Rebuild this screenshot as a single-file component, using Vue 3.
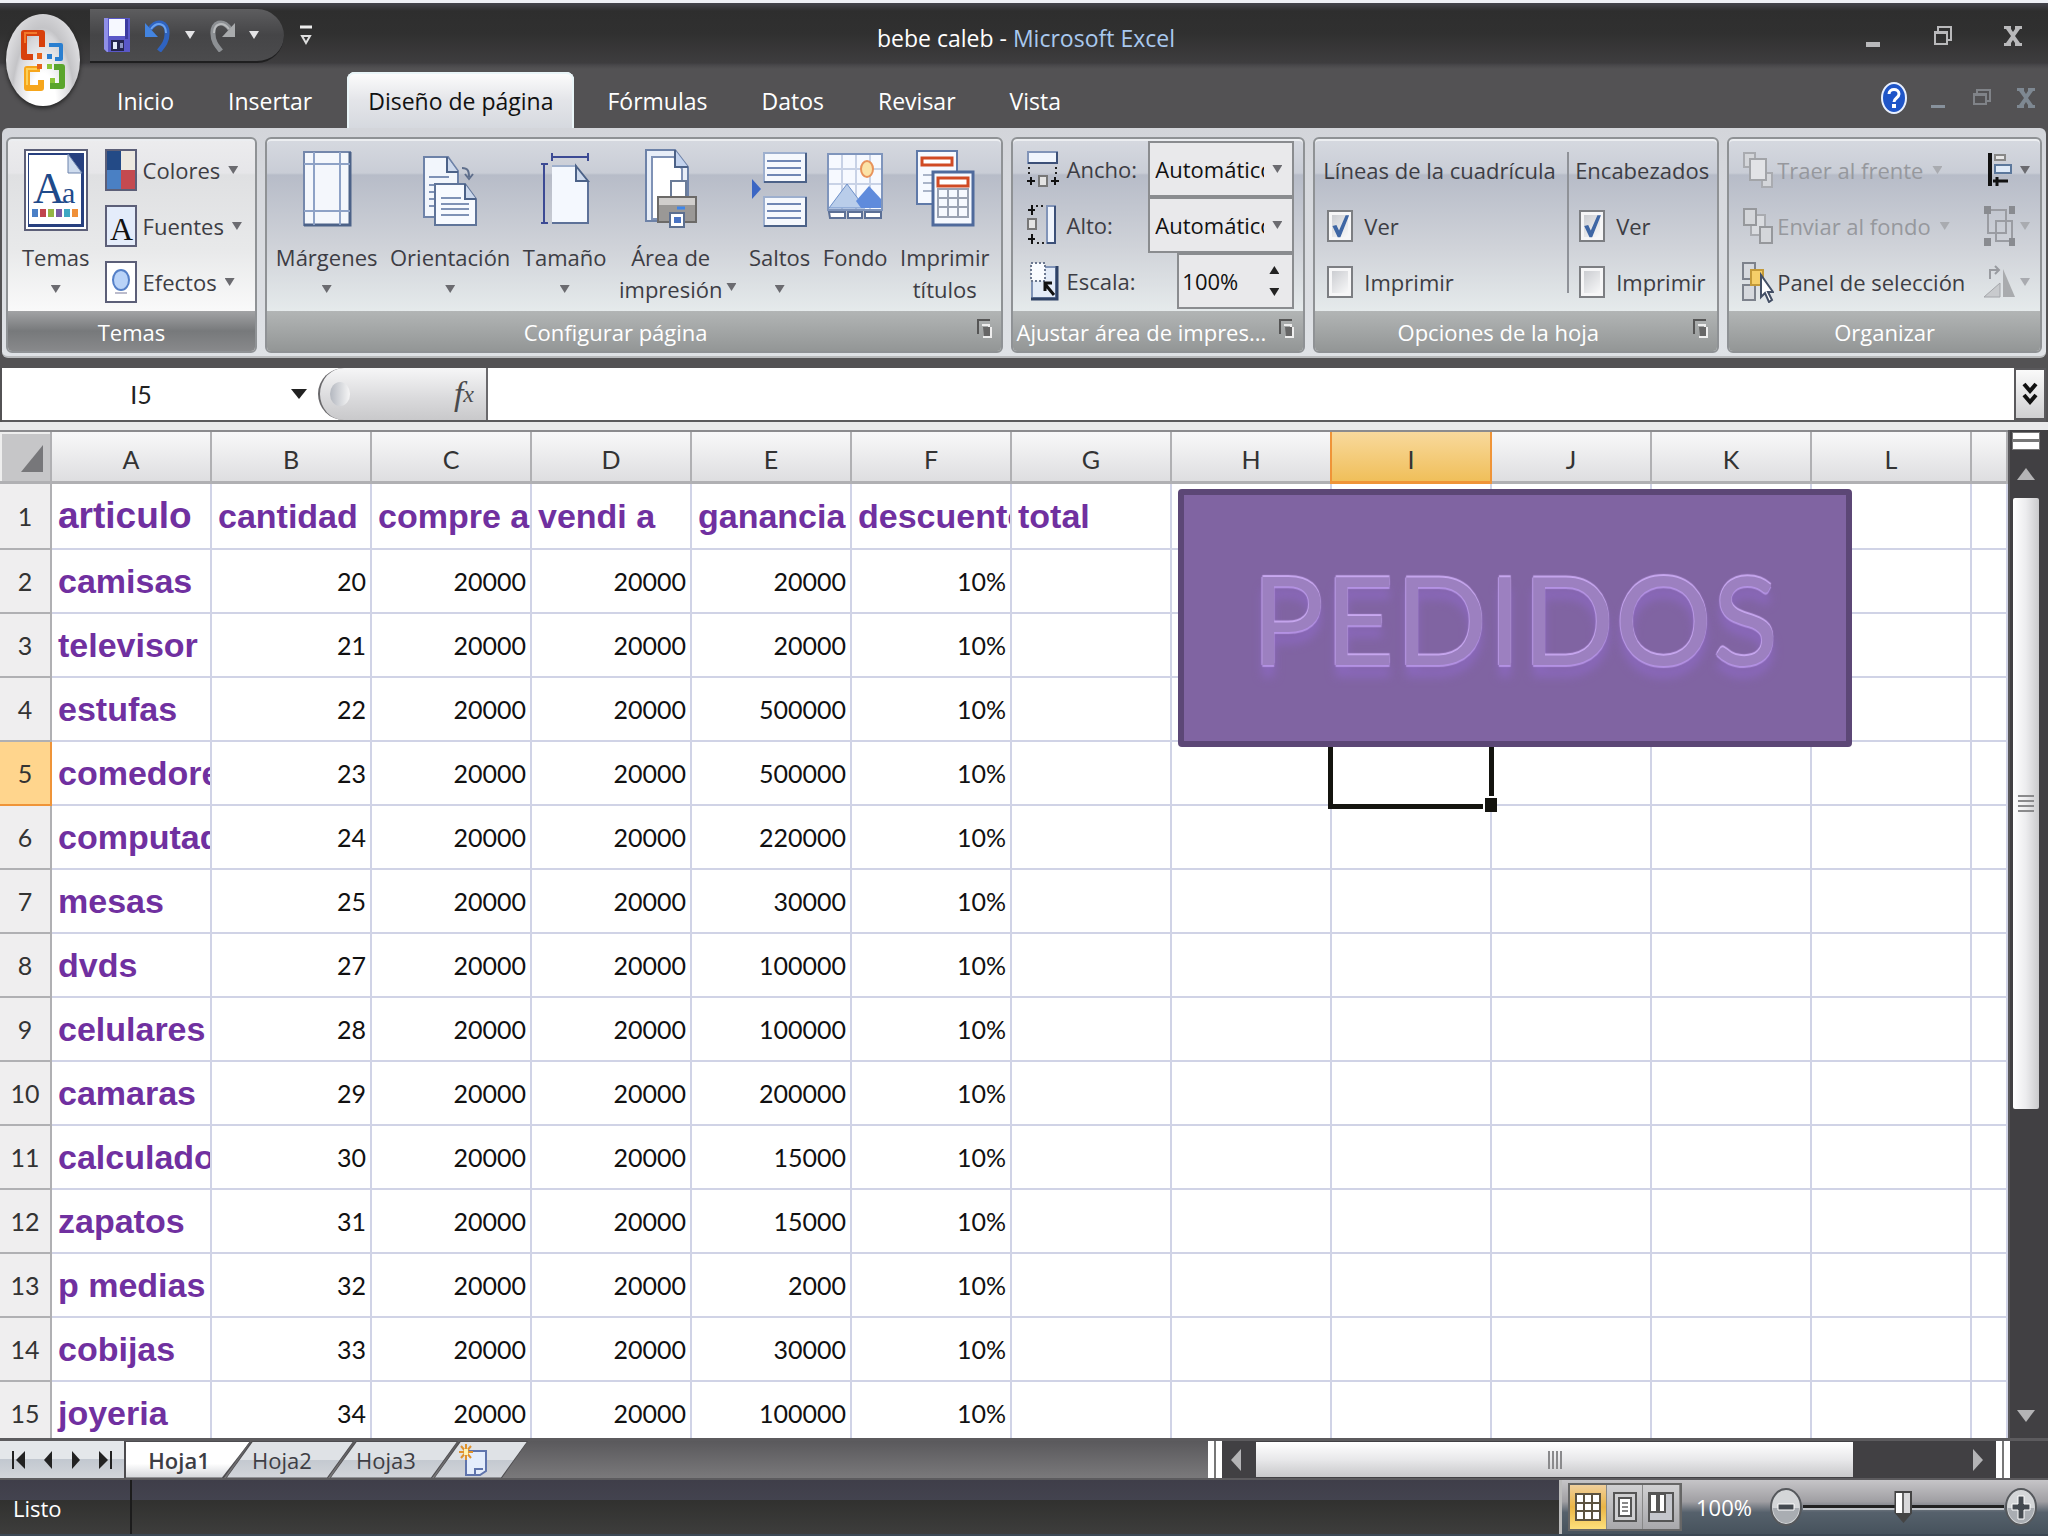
<script setup>
import { ref } from 'vue'

const columns = ['A', 'B', 'C', 'D', 'E', 'F', 'G', 'H', 'I', 'J', 'K', 'L', '']
const titles = ['articulo', 'cantidad', 'compre a', 'vendi a', 'ganancia', 'descuento', 'total']
const items = [
  ['camisas', 20, 20000],
  ['televisor', 21, 20000],
  ['estufas', 22, 500000],
  ['comedores', 23, 500000],
  ['computador', 24, 220000],
  ['mesas', 25, 30000],
  ['dvds', 27, 100000],
  ['celulares', 28, 100000],
  ['camaras', 29, 200000],
  ['calculadora', 30, 15000],
  ['zapatos', 31, 15000],
  ['p medias', 32, 2000],
  ['cobijas', 33, 30000],
  ['joyeria', 34, 100000],
]
const rows = [titles, ...items.map(([name, qty, gain]) => [name, qty, 20000, 20000, gain, '10%'])]
const selected = { row: 5, col: 8 }

const tabs = ['Inicio', 'Insertar', 'Diseño de página', 'Fórmulas', 'Datos', 'Revisar', 'Vista']
const activeTab = ref('Diseño de página')
const sheets = ['Hoja1', 'Hoja2', 'Hoja3']
const activeSheet = ref('Hoja1')

const optionSets = [
  { title: 'Líneas de la cuadrícula', id: 'grid' },
  { title: 'Encabezados', id: 'head' },
]
</script>

<template>
  <div class="app">
    <header class="titlebar">
      <div class="quick">
        <button aria-label="Guardar">
          <svg width="28" height="36" viewBox="0 0 28 36"><path d="M1 1h26v34H4l-3-3z" fill="#5a58c8" /><path d="M1 1h4v34H4l-3-3z" fill="#8f8fe8" /><path d="M6 2h16v17H6z" fill="#f6f8ff" /><path d="M22 2h3v20h-3z" fill="#3b3aa0" /><path d="M8 23h13v11H8z" fill="#26264e" /><path d="M10 25h4v7h-4z" fill="#e6ecf8" /><path d="M17 26h3v5h-3z" fill="#8b93c0" /></svg>
        </button>
        <button aria-label="Deshacer">
          <svg width="28" height="34" viewBox="0 0 28 34"><path d="M6 11C13 1 24 4 23 16c0 7-3 11-8 17" fill="none" stroke="#2f63c0" stroke-width="5" /><path d="M7 11C13 3 22 5 22 15" fill="none" stroke="#6ba2ee" stroke-width="2" /><path d="M1 5v14h13z" fill="#4384e0" /></svg>
        </button>
        <i class="arrow light"></i>
        <button aria-label="Rehacer">
          <svg width="28" height="34" viewBox="0 0 28 34"><path d="M22 11C15 1 4 4 5 16c0 7 3 11 8 17" fill="none" stroke="#8d9094" stroke-width="5" /><path d="M21 11C15 3 6 5 6 15" fill="none" stroke="#b9bbbd" stroke-width="2" /><path d="M27 5v14H14z" fill="#a9abad" /></svg>
        </button>
        <i class="arrow light"></i>
      </div>
      <button class="customize" aria-label="Personalizar"><svg width="14" height="22" viewBox="0 0 14 22"><path d="M1 2h12" stroke="#eee" stroke-width="3" /><path d="M3 11h8l-4 7z" fill="none" stroke="#ddd" stroke-width="2" /></svg></button>
      <h1>bebe caleb - <span>Microsoft Excel</span></h1>
      <div class="winctl">
        <button aria-label="Minimizar"><svg width="20" height="24" viewBox="0 0 20 24"><path d="M3 18h14v5H3z" fill="#b9b9bb" /></svg></button>
        <button aria-label="Restaurar"><svg width="20" height="22" viewBox="0 0 20 22"><path d="M5 6V2h13v13h-4M2 7h12v12H2zM2 8h12" fill="none" stroke="#b9b9bb" stroke-width="2" /></svg></button>
        <button aria-label="Cerrar"><svg width="20" height="22" viewBox="0 0 20 22"><path d="M1 1h7v3l2 3 2-3V1h7v3h-2l-5 7 5 7h2v3h-7v-3l-2-3-2 3v3H1v-3h2l5-7-5-7H1z" fill="#b9b9bb" /></svg></button>
      </div>
    </header>

    <nav class="tabs">
      <button v-for="t in tabs" :key="t" :class="{ active: t === activeTab }" @click="activeTab = t">{{ t }}</button>
      <div class="mdi">
        <button aria-label="Ayuda"><svg width="28" height="36" viewBox="0 0 28 36"><ellipse cx="14" cy="18" rx="12" ry="15" fill="#1f55c8" stroke="#e8f0ff" stroke-width="2" /><path d="M9 14c0-6 10-6 10 0 0 4-5 4-5 8" fill="none" stroke="#fff" stroke-width="3" /><path d="M12 24h4v4h-4z" fill="#fff" /></svg></button>
        <button aria-label="Minimizar libro"><svg width="18" height="24" viewBox="0 0 18 24"><path d="M2 19h14v3H2z" fill="#87919c" /></svg></button>
        <button aria-label="Restaurar libro"><svg width="20" height="20" viewBox="0 0 20 20"><path d="M5 5V2h13v11h-4M2 6h12v10H2zM2 7h12" fill="none" stroke="#808388" stroke-width="2" /></svg></button>
        <button aria-label="Cerrar libro"><svg width="20" height="22" viewBox="0 0 20 22"><path d="M1 1h7v3l2 3 2-3V1h7v3h-2l-5 7 5 7h2v3h-7v-3l-2-3-2 3v3H1v-3h2l5-7-5-7H1z" fill="#7e8892" /></svg></button>
      </div>
    </nav>

    <button class="orb" aria-label="Botón de Office">
      <svg width="48" height="64" viewBox="0 0 48 64">
        <path d="M14 29H5V5h18v14" fill="none" stroke="#d8400c" stroke-width="6" stroke-linejoin="round" />
        <path d="M6 15V5h12" fill="none" stroke="#f27a2c" stroke-width="2" />
        <path d="M30 17h12v14h-6" fill="none" stroke="#2a7fd0" stroke-width="4" stroke-linejoin="round" />
        <path d="M21 41H8v19h14v-8" fill="none" stroke="#f6a61c" stroke-width="6" stroke-linejoin="round" />
        <path d="M8 57V41h10" fill="none" stroke="#fcd058" stroke-width="2" />
        <path d="M31 58h12V39h-8" fill="none" stroke="#5aa52c" stroke-width="6" stroke-linejoin="round" />
        <path d="M18 25h5v6h-5zM18 36h5v5h-5z" fill="#e8641c" /><path d="M28 26h5v5h-5z" fill="#2a7fd0" /><path d="M28 36h5v5h-5zM31 50h5v5h-5z" fill="#8cc63a" />
      </svg>
    </button>

    <section class="ribbon">
      <div class="group bright">
        <div class="body themes">
          <button class="big">
            <svg width="64" height="82" viewBox="0 0 64 82"><path d="M1 1h62v80H1z" fill="#fff" stroke="#5c5f78" stroke-width="2" /><path d="M4 4h56v74H4z" fill="#27407f" /><path d="M5 6h39l13 18v51H5z" fill="#fff" /><path d="M44 5v19h14z" fill="#cfdcee" stroke="#6c83ac" /><text x="9" y="54" font-family="Liberation Serif, serif" font-size="44" fill="#1f4a8a">A</text><text x="38" y="54" font-family="Liberation Serif, serif" font-size="30" fill="#1f4a8a">a</text><path d="M8 60h6v8H8z" fill="#4a7fc6" /><path d="M16 60h6v8h-6z" fill="#c0444c" /><path d="M24 60h6v8h-6z" fill="#95b545" /><path d="M32 60h6v8h-6z" fill="#7a5ba6" /><path d="M40 60h6v8h-6z" fill="#3fa8c4" /><path d="M48 60h6v8h-6z" fill="#f09038" /></svg>
            <span>Temas</span><i class="arrow"></i>
          </button>
          <div class="stack">
            <button class="line"><svg width="32" height="42" viewBox="0 0 32 42"><path d="M1 1h30v40H1z" fill="#ece8e0" stroke="#5c5f78" stroke-width="2" /><path d="M2 2h14v19H2z" fill="#234a86" /><path d="M2 21h14v19H2z" fill="#4a80c4" /><path d="M16 21h14v19H16z" fill="#c44a50" /></svg>Colores<i class="arrow"></i></button>
            <button class="line"><svg width="32" height="42" viewBox="0 0 32 42"><path d="M1 1h30v40H1z" fill="#e4ecfa" stroke="#5c5f78" stroke-width="2" /><text x="5" y="35" font-family="Liberation Serif, serif" font-size="32" fill="#111">A</text></svg>Fuentes<i class="arrow"></i></button>
            <button class="line"><svg width="32" height="42" viewBox="0 0 32 42"><path d="M1 1h30v40H1z" fill="#fff" stroke="#5c5f78" stroke-width="2" /><ellipse cx="16" cy="19" rx="8" ry="10" fill="#b9d3f8" stroke="#5580c8" stroke-width="2" /><path d="M10 32h12" stroke="#bcbccc" stroke-width="2" /></svg>Efectos<i class="arrow"></i></button>
          </div>
        </div>
        <footer><span>Temas</span></footer>
      </div>

      <div class="group">
        <div class="body setup">
          <button class="big">
            <svg width="52" height="80" viewBox="0 0 52 80"><path d="M3 3h46v73H3z" fill="#f4f7fc" stroke="#7487ab" stroke-width="2" /><path d="M49 3v73H3" fill="none" stroke="#4c6288" stroke-width="3" /><path d="M13 3v73M39 3v73M3 15h46M3 62h46" stroke="#8ea2c6" stroke-width="2" /></svg>
            <span>Márgenes</span><i class="arrow"></i>
          </button>
          <button class="big">
            <svg width="56" height="80" viewBox="0 0 56 80"><path d="M2 8h24l10 14v46H2z" fill="#f2f6fc" stroke="#6d82a8" stroke-width="2" /><path d="M25 8v15h11" fill="#cdd9ec" stroke="#4c6288" stroke-width="2" /><path d="M7 28h20M7 36h8M7 43h8M7 50h8M7 57h8" stroke="#7f92b6" stroke-width="2" /><path d="M13 35h30l11 15v26H13z" fill="#f7faff" stroke="#5f7499" stroke-width="2" /><path d="M43 35v15h11" fill="#cdd9ec" stroke="#4c6288" stroke-width="2" /><path d="M19 49h20M19 55h28M19 60h28M19 66h28" stroke="#7f92b6" stroke-width="2" /><path d="M40 19c6 0 7 3 7 9M43 25l4 5 4-5" fill="none" stroke="#5f6f8c" stroke-width="2" /></svg>
            <span>Orientación</span><i class="arrow"></i>
          </button>
          <button class="big">
            <svg width="50" height="80" viewBox="0 0 50 80"><path d="M12 8h36M12 4v8M48 4v8M4 15v59M1 15h7M1 74h7" stroke="#3c4a94" stroke-width="2" /><path d="M12 17h25l11 15v42H12z" fill="#f4f8fe" /><path d="M12 17h25" stroke="#9fb0cc" stroke-width="2" /><path d="M48 32v42H12" fill="none" stroke="#5d7198" stroke-width="2" /><path d="M36 17v15h12z" fill="#cdd9ec" stroke="#4c6288" stroke-width="2" /></svg>
            <span>Tamaño</span><i class="arrow"></i>
          </button>
          <button class="big">
            <svg width="54" height="80" viewBox="0 0 54 80"><path d="M2 1h29l13 17v54H2z" fill="#e8eef8" stroke="#6d82a8" stroke-width="2" /><path d="M8 8h22l8 12v50H8z" fill="#fff" stroke="#7f92b6" stroke-width="2" /><path d="M31 1v17h13" fill="#c3d3ee" stroke="#4c6288" stroke-width="2" /><path d="M27 32h15v16H27z" fill="#fff" stroke="#6b7c98" stroke-width="2" /><path d="M14 48h38v25H14z" fill="#9a9896" stroke="#6c6a68" stroke-width="2" /><path d="M15 49h36v7H15z" fill="#d0cecc" /><path d="M33 59h8" stroke="#3f86e8" stroke-width="3" /><path d="M26 64h14v14H26z" fill="#fff" stroke="#5c6f90" stroke-width="2" /><path d="M30 68h7v6h-7z" fill="#4a74c4" /></svg>
            <span>Área de<br />impresión</span><i class="arrow inline"></i>
          </button>
          <button class="big">
            <svg width="56" height="80" viewBox="0 0 56 80"><path d="M0 30v20l9-10z" fill="#3b66c4" /><path d="M12 4h42v29H12zM12 48h42v29H12z" fill="#f5f8fd" stroke="#9dafce" stroke-width="2" /><path d="M54 4v29H12M54 48v29H12" fill="none" stroke="#4c6288" stroke-width="2" /><path d="M15 12h34M15 19h34M15 26h34M15 55h34M15 62h34M15 69h34" stroke="#6f86b4" stroke-width="2" /></svg>
            <span>Saltos</span><i class="arrow"></i>
          </button>
          <button class="big">
            <svg width="60" height="80" viewBox="0 0 60 80"><path d="M3 5h54v56H3z" fill="#f6f9ff" stroke="#7f95bc" stroke-width="2" /><path d="M17 6v54M31 6v54M45 6v54M4 20h52M4 35h52" stroke="#c8d2e6" stroke-width="2" /><ellipse cx="42" cy="20" rx="6" ry="8" fill="#fbe3a8" stroke="#e8935c" stroke-width="2" /><path d="M4 59l18-24 18 24z" fill="#b9cdea" stroke="#6c8fc8" /><path d="M31 52l13-15 12 13v9H36z" fill="#5f8bdc" /><path d="M4 63h16v6H5zM23 63h14v6H23zM40 63h16v6H40z" fill="#fff" stroke="#5c7096" stroke-width="2" /></svg>
            <span>Fondo</span>
          </button>
          <button class="big">
            <svg width="60" height="80" viewBox="0 0 60 80"><path d="M2 2h40v53H2z" fill="#f6f9ff" stroke="#5f79a8" stroke-width="2" /><path d="M7 9h30v7H7z" fill="#fff" stroke="#d04a24" stroke-width="3" /><path d="M8 26h10M8 34h10M8 42h10" stroke="#aab4c8" stroke-width="2" /><path d="M18 23h40v53H18z" fill="#f6f9ff" stroke="#4f6a9c" stroke-width="3" /><path d="M23 29h30v8H23z" fill="#fff" stroke="#d04a24" stroke-width="3" /><path d="M23 40h30v28H23zM23 49h30M23 58h30M33 40v28M43 40v28" fill="none" stroke="#9aa2b2" stroke-width="2" /></svg>
            <span>Imprimir<br />títulos</span>
          </button>
        </div>
        <footer class="more"><span>Configurar página</span><button class="launch" aria-label="Más opciones de página"><svg width="16" height="20" viewBox="0 0 16 20"><path d="M1 15V1h12" fill="none" stroke="#555" stroke-width="2" /><path d="M5 6h7v3M14 8v10H6" fill="none" stroke="#eee" stroke-width="2" /><path d="M6 8h7v9H7z" fill="#666" /></svg></button></footer>
      </div>

      <div class="group">
        <div class="body fit">
          <div class="field">
            <svg width="32" height="42" viewBox="0 0 32 42"><path d="M1 4h29v11H1z" fill="#f0f5fd" stroke="#8194b8" stroke-width="2" /><path d="M30 4v11H1" fill="none" stroke="#3c5078" stroke-width="2" /><path d="M2 19v10M29 19v10" stroke="#222" stroke-width="2" stroke-dasharray="2 3" /><path d="M0 33h8M4 29v8M24 33h8M28 29v8" stroke="#111" stroke-width="2" /><path d="M12 28h8v10h-8z" fill="#e4e4e4" stroke="#777" stroke-width="2" /></svg>
            <label for="ancho">Ancho:</label>
            <div class="pick"><select id="ancho"><option>Automático</option></select><i class="arrow"></i></div>
          </div>
          <div class="field">
            <svg width="32" height="42" viewBox="0 0 32 42"><path d="M20 2h8v37h-8z" fill="#f0f5fd" stroke="#8194b8" stroke-width="2" /><path d="M28 2v37h-8" fill="none" stroke="#3c5078" stroke-width="2" /><path d="M9 2h8M10 39h8" stroke="#222" stroke-width="2" stroke-dasharray="2 3" /><path d="M1 6h7M5 1v10M1 35h7M5 30v10" stroke="#111" stroke-width="2" /><path d="M1 15h8v10H1z" fill="#e4e4e4" stroke="#777" stroke-width="2" /></svg>
            <label for="alto">Alto:</label>
            <div class="pick"><select id="alto"><option>Automático</option></select><i class="arrow"></i></div>
          </div>
          <div class="field">
            <svg width="32" height="42" viewBox="0 0 32 42"><path d="M5 7h24v31H5z" fill="#e3ebf7" stroke="#8194b8" stroke-width="2" /><path d="M30 6v33H4" fill="none" stroke="#2f4266" stroke-width="3" /><path d="M4 3h14v18H4z" fill="#fafcff" stroke="#6c7890" stroke-width="2" stroke-dasharray="2 2" /><path d="M27 35L18 24M18 31v-8h7" fill="none" stroke="#111" stroke-width="3" /></svg>
            <label for="escala">Escala:</label>
            <div class="spin"><input id="escala" value="100%" /><span><i class="arrow up dark"></i><i class="arrow dark"></i></span></div>
          </div>
        </div>
        <footer class="left"><span>Ajustar área de impres...</span><button class="launch" aria-label="Más opciones de ajuste"><svg width="16" height="20" viewBox="0 0 16 20"><path d="M1 15V1h12" fill="none" stroke="#555" stroke-width="2" /><path d="M5 6h7v3M14 8v10H6" fill="none" stroke="#eee" stroke-width="2" /><path d="M6 8h7v9H7z" fill="#666" /></svg></button></footer>
      </div>

      <div class="group">
        <div class="body options">
          <fieldset v-for="o in optionSets" :key="o.id">
            <legend>{{ o.title }}</legend>
            <label :for="o.id + '-ver'"><input :id="o.id + '-ver'" type="checkbox" checked />Ver</label>
            <label :for="o.id + '-imp'"><input :id="o.id + '-imp'" type="checkbox" />Imprimir</label>
          </fieldset>
        </div>
        <footer class="more"><span>Opciones de la hoja</span><button class="launch" aria-label="Más opciones de hoja"><svg width="16" height="20" viewBox="0 0 16 20"><path d="M1 15V1h12" fill="none" stroke="#555" stroke-width="2" /><path d="M5 6h7v3M14 8v10H6" fill="none" stroke="#eee" stroke-width="2" /><path d="M6 8h7v9H7z" fill="#666" /></svg></button></footer>
      </div>

      <div class="group">
        <div class="body arrange">
          <div class="stack">
            <button class="line" disabled><svg width="32" height="42" viewBox="0 0 32 42"><path d="M2 4h11v14H2zM20 24h10v14H20z" fill="#d4d6da" stroke="#a9abb0" stroke-width="2" /><path d="M8 10h16v21H8z" fill="#e2e3e6" stroke="#a2a4a8" stroke-width="2" /></svg>Traer al frente<i class="arrow pale"></i></button>
            <button class="line" disabled><svg width="32" height="42" viewBox="0 0 32 42"><path d="M9 10h14v20H9z" fill="#dadce0" stroke="#a9abb0" stroke-width="2" /><path d="M2 4h12v16H2zM18 22h12v16H18z" fill="#d4d6da" stroke="#96989c" stroke-width="2" /></svg>Enviar al fondo<i class="arrow pale"></i></button>
            <button class="line"><svg width="32" height="42" viewBox="0 0 32 42"><path d="M1 2h12v16H1zM1 24h12v15H1z" fill="#d6d9de" stroke="#7d828c" stroke-width="2" /><path d="M9 9h12v15H9z" fill="#f6cf68" stroke="#c49a38" stroke-width="2" /><path d="M19 14v22l4-4 4 9 3-2-4-8h5z" fill="#fff" stroke="#445066" stroke-width="2" /></svg>Panel de selección</button>
          </div>
          <div class="stack right">
            <button class="line" aria-label="Alinear"><svg width="32" height="42" viewBox="0 0 32 42"><path d="M4 4h4v33H4z" fill="#111" /><path d="M11 6h10v5H11z" fill="#e8e8e8" stroke="#888" stroke-width="2" /><path d="M11 16h16v8H11z" fill="#dfeaf8" stroke="#5c789c" stroke-width="2" /><path d="M9 32h15M13 28v9" stroke="#111" stroke-width="3" /></svg><i class="arrow"></i></button>
            <button class="line" disabled aria-label="Agrupar"><svg width="32" height="42" viewBox="0 0 32 42"><path d="M4 5h18v23H4zM12 16h16v20H12z" fill="none" stroke="#9a9ca2" stroke-width="2" /><path d="M0 1h7v8H0zM25 1h6v8h-6zM0 33h7v8H0zM25 33h6v8h-6z" fill="#898b90" /></svg><i class="arrow pale"></i></button>
            <button class="line" disabled aria-label="Girar"><svg width="32" height="42" viewBox="0 0 32 42"><path d="M0 36h16V22z" fill="#c8cacd" stroke="#a4a6aa" /><path d="M19 8l12 28H19z" fill="#a9abae" /><path d="M6 18V9h8M11 5l4 4-4 4" fill="none" stroke="#999ba0" stroke-width="2" /></svg><i class="arrow pale"></i></button>
          </div>
        </div>
        <footer><span>Organizar</span></footer>
      </div>
    </section>

    <section class="formula">
      <div class="namebox"><input aria-label="Cuadro de nombres" value="I5" /><i class="arrow dark"></i></div>
      <div class="fx"><i></i><button>f<sub>x</sub></button></div>
      <input class="entry" aria-label="Barra de fórmulas" />
      <button class="expand" aria-label="Expandir"><svg width="16" height="24" viewBox="0 0 16 24"><path d="M2 2l6 7 6-7M2 13l6 7 6-7" fill="none" stroke="#111" stroke-width="4" /></svg></button>
    </section>

    <main class="work">
      <div class="sheet">
        <table>
          <colgroup><col class="rowcol" /><col v-for="n in 12" :key="n" class="datacol" /><col /></colgroup>
          <thead>
            <tr>
              <th class="corner"><svg width="24" height="28" viewBox="0 0 24 28"><path d="M23 0v27H1z" fill="#77777a" /></svg></th>
              <th v-for="(c, i) in columns" :key="i" :class="{ hot: i === selected.col }">{{ c }}</th>
            </tr>
          </thead>
          <tbody>
            <tr v-for="(r, ri) in rows" :key="ri">
              <th :class="{ hot: ri + 1 === selected.row }">{{ ri + 1 }}</th>
              <td v-for="(c, ci) in columns" :key="ci" :class="{ word: ri === 0 || ci === 0, lead: ri === 0 && ci === 0, picked: ri + 1 === selected.row && ci === selected.col }">{{ r[ci] }}</td>
            </tr>
          </tbody>
        </table>
        <div class="shape">PEDIDOS</div>
      </div>
      <div class="vscroll">
        <div class="split"></div>
        <i class="arrow up big-arrow"></i>
        <div class="track"><div class="thumb"><i></i><i></i><i></i><i></i></div></div>
        <i class="arrow big-arrow"></i>
      </div>
    </main>

    <section class="sheetbar">
      <div class="steps">
        <button aria-label="Primera hoja"><svg width="14" height="20" viewBox="0 0 14 20"><path d="M1 1v18" stroke="#222" stroke-width="2" /><path d="M13 1v18L4 10z" fill="#222" /></svg></button>
        <button aria-label="Hoja anterior"><svg width="10" height="20" viewBox="0 0 10 20"><path d="M9 1v18L1 10z" fill="#222" /></svg></button>
        <button aria-label="Hoja siguiente"><svg width="10" height="20" viewBox="0 0 10 20"><path d="M1 1v18l8-9z" fill="#222" /></svg></button>
        <button aria-label="Última hoja"><svg width="14" height="20" viewBox="0 0 14 20"><path d="M13 1v18" stroke="#222" stroke-width="2" /><path d="M1 1v18l9-9z" fill="#222" /></svg></button>
      </div>
      <div class="sheets">
        <button v-for="s in sheets" :key="s" :class="{ active: s === activeSheet }" @click="activeSheet = s"><span>{{ s }}</span></button>
        <button aria-label="Insertar hoja"><span><svg width="30" height="34" viewBox="0 0 30 34"><path d="M8 8h20v20l-6 4H8z" fill="#e4edfc" stroke="#5f74ac" stroke-width="2" /><path d="M17 31v-5h8" fill="none" stroke="#5f74ac" stroke-width="2" /><path d="M8 1v16M1 9h14M3 3l10 12M13 3L3 15" stroke="#e0922c" stroke-width="2" /><path d="M6 6h4v6H6z" fill="#fff2b0" /></svg></span></button>
      </div>
      <div class="hscroll">
        <div class="split"></div>
        <div class="rail">
          <svg width="12" height="22" viewBox="0 0 12 22"><path d="M11 0v22L1 11z" fill="#b4b4b6" /></svg>
          <div class="track"><div class="thumb"><i></i><i></i><i></i><i></i></div></div>
          <svg width="12" height="22" viewBox="0 0 12 22"><path d="M1 0v22l10-11z" fill="#b4b4b6" /></svg>
        </div>
        <div class="split"></div>
      </div>
    </section>

    <footer class="status">
      <span class="ready">Listo</span>
      <div class="zoom">
        <div class="views">
          <button class="on" aria-label="Normal"><svg width="26" height="30" viewBox="0 0 26 30"><path d="M1 2h24v26H1z" fill="#fff" stroke="#5c5340" stroke-width="2" /><path d="M9 2v26M17 2v26M1 11h24M1 19h24" stroke="#5c5340" stroke-width="2" /></svg></button>
          <button aria-label="Diseño de página"><svg width="26" height="30" viewBox="0 0 26 30"><path d="M2 1h22v28H2z" fill="#cfcfd1" stroke="#555" stroke-width="2" /><path d="M7 6h12v18H7z" fill="#fff" stroke="#555" stroke-width="2" /><path d="M10 11h6M10 15h6M10 19h6" stroke="#888" stroke-width="2" /></svg></button>
          <button aria-label="Salto de página"><svg width="26" height="30" viewBox="0 0 26 30"><path d="M1 1h24v28H1z" fill="#c4c6cc" stroke="#555" stroke-width="2" /><path d="M2 2h7v18H2zM11 2h6v18h-6z" fill="#fff" stroke="#555" stroke-width="2" /></svg></button>
        </div>
        <span>100%</span>
        <button aria-label="Alejar"><svg width="34" height="42" viewBox="0 0 34 42"><ellipse cx="17" cy="21" rx="15" ry="18" fill="#d4d6d8" stroke="#55585c" stroke-width="2" /><path d="M4 22h26c0 8-6 15-13 15S4 30 4 22z" fill="#a9adb2" /><path d="M9 18h16v6H9z" fill="#444a50" stroke="#fff" /></svg></button>
        <input type="range" min="0" max="100" value="50" aria-label="Zoom" />
        <button aria-label="Acercar"><svg width="34" height="42" viewBox="0 0 34 42"><ellipse cx="17" cy="21" rx="15" ry="18" fill="#d4d6d8" stroke="#55585c" stroke-width="2" /><path d="M4 22h26c0 8-6 15-13 15S4 30 4 22z" fill="#a9adb2" /><path d="M14 10h6v8h6v6h-6v9h-6v-9H8v-6h6z" fill="#444a50" stroke="#fff" /></svg></button>
      </div>
    </footer>
  </div>
</template>

<style>
body { background: #535254; }
</style>

<style scoped>
* { box-sizing: border-box; }
.app { position: relative; display: flex; flex-direction: column; height: 100vh; overflow: hidden; border-top: 3px solid #eef0f6; background: #535254; color: #3d3d44; font: 22px/32px "Open Sans", "Noto Sans", sans-serif; }
button, input, select { font: inherit; color: inherit; border: 0; padding: 0; margin: 0; background: none; border-radius: 0; }
button { display: flex; align-items: center; justify-content: center; white-space: nowrap; }
svg { display: block; flex: none; }
.arrow { display: block; flex: none; width: 10px; height: 8px; background: #6b6b70; clip-path: polygon(0 0, 100% 0, 50% 100%); }
.arrow.up { clip-path: polygon(50% 0, 100% 100%, 0 100%); }
.arrow.light { background: #e4e4e6; }
.arrow.pale { background: #a9abb0; }
.arrow.dark { background: #222; }

.titlebar { display: flex; align-items: center; flex: none; height: 66px; padding-left: 90px; background: linear-gradient(#45454d 0, #2e2e2e 8px, #303030 30px, #3e3d3f 60px, #48474a 62px, #535254); }
.quick { display: flex; align-items: center; gap: 13px; height: 54px; width: 194px; padding-left: 13px; border-radius: 0 27px 27px 0; background: linear-gradient(#5d5d5f, #454547 50%, #4b4b4d); border-bottom: 2px solid #1f1f20; }
.quick button { width: 28px; }
.customize { width: 44px; }
h1 { flex: 1; margin: 0; padding: 3px 114px 0 0; text-align: center; font-size: 23px; line-height: 32px; font-weight: 400; color: #fff; }
h1 span { color: #a9c8ee; }
.winctl { display: flex; flex: none; }
.winctl button { width: 70px; height: 60px; }

.tabs { display: flex; flex: none; height: 59px; padding: 3px 0 0 90px; color: #fff; font-size: 23px; }
.tabs > button { padding: 2px 27px 0; }
.tabs > button.active { margin: 0 6px 0 8px; padding: 2px 21px 0; color: #111; border-radius: 8px 8px 0 0; background: linear-gradient(#fdfdfd, #e4e5e9 50%, #d6d9df); box-shadow: inset 0 2px 0 #e9f5f8, inset 2px 0 0 #e9f5f8, inset -2px 0 0 #e9f5f8; }
.mdi { display: flex; margin-left: auto; }
.mdi button { width: 44px; padding-bottom: 4px; }

.orb { position: absolute; left: 6px; top: 11px; width: 74px; height: 92px; border-radius: 50%; background: radial-gradient(ellipse at 50% 100%, #fff 25%, #d5d5d8 55%, #c4c4c7 60%, #f4f4f6 100%); box-shadow: 0 2px 4px #222; }

.ribbon { display: grid; flex: none; grid-template-columns: 251fr 738fr 295fr 406fr 315fr; gap: 8px; margin: 0 2px; height: 230px; padding: 9px 4px 3px; border-radius: 6px; border-bottom: 2px solid #b9bbbd; background: linear-gradient(#d3d5da, #dfe2e6); }
.group { display: flex; flex-direction: column; min-width: 0; border: 2px solid #8f9295; border-radius: 6px; overflow: hidden; background: linear-gradient(#d6d9e0 0, #c9cdd6 34px, #b7bcc8 36px, #d0d3d9 110px, #e6ebec 174px); box-shadow: inset 0 2px 0 #eceef1; }
.group.bright { background: linear-gradient(#ececee 0, #e6e6e9 34px, #dfe0e2 36px, #e8e9ea 110px, #fafafa 174px); }
.body { flex: 1; display: flex; min-height: 0; }
.group > footer { position: relative; display: flex; flex: none; justify-content: center; align-items: center; height: 40px; padding-top: 2px; color: #fff; background: linear-gradient(#b2b5b5, #939696); }
.group.bright > footer { background: linear-gradient(#a2a3a5, #77797b 50%, #88898b); }
.group > footer.more { padding-right: 36px; }
.group > footer.left { justify-content: flex-start; padding-left: 4px; }
.launch { position: absolute; right: 8px; top: 8px; }

.big { flex-direction: column; justify-content: flex-start; position: relative; padding-top: 10px; line-height: 32px; }
.big svg { margin-bottom: 12px; }
.themes .big svg { margin-bottom: 10px; }
.big > .arrow { margin-top: 12px; }
.big > .arrow.inline { position: absolute; right: 0; bottom: 20px; margin: 0; }
.setup .big:nth-child(4) { padding-right: 14px; }
.setup { justify-content: space-between; padding: 0 11px 0 9px; }
.themes { gap: 15px; padding-left: 14px; }
.stack { display: flex; flex-direction: column; padding-top: 3px; }
.line { justify-content: flex-start; gap: 6px; height: 56px; }
.line .arrow { margin-left: 2px; }
.line:disabled { color: #96989d; }

.fit { flex-direction: column; padding: 2px 9px 0 14px; }
.field { display: flex; align-items: center; height: 56px; gap: 8px; }
.field label { flex: 1; }
.pick, .spin { display: flex; align-items: center; width: 146px; height: 56px; border: 2px solid #8a8c8f; background: #e9e9eb; color: #111; }
.pick select { appearance: none; width: 114px; height: 50px; padding-left: 5px; overflow: hidden; }
.pick .arrow { margin-left: 8px; }
.spin { width: 117px; }
.spin input { width: 84px; padding-left: 3px; }
.spin span { display: flex; flex-direction: column; gap: 14px; padding-left: 6px; }

.options { padding: 3px 8px 0 8px; justify-content: space-between; }
fieldset { margin: 0; padding: 0; border: 0; min-width: 0; }
fieldset + fieldset { padding-left: 8px; background: linear-gradient(#8f9298, #8f9298) 0 10px / 2px 141px no-repeat; }
legend { float: left; width: 100%; padding: 0; line-height: 56px; white-space: nowrap; }
fieldset label { display: flex; clear: both; align-items: center; gap: 11px; height: 56px; padding-left: 4px; }
input[type="checkbox"] { appearance: none; width: 26px; height: 32px; border: 2px solid #7c7e82; background: linear-gradient(135deg, #c4c6cb, #fff); box-shadow: inset 0 0 0 3px #f6f6f7; }
input[type="checkbox"]:checked::before { content: ""; display: block; width: 22px; height: 28px; background: #3e66a4; clip-path: polygon(14% 50%, 32% 46%, 44% 66%, 74% 12%, 90% 12%, 50% 90%, 38% 90%); }

.arrange { justify-content: space-between; padding: 0 10px 0 13px; }
.arrange .line { gap: 3px; }
.arrange .line .arrow { margin-left: 6px; }
.arrange .right .line .arrow { margin-left: 1px; }

.formula { display: flex; flex: none; margin: 10px 2px 0 2px; height: 54px; border-bottom: 2px solid #5a595c; background: #fff; }
.namebox { display: flex; align-items: center; width: 316px; color: #222; }
.namebox input { width: 278px; text-align: center; font: 25px/32px Lato, "Open Sans", sans-serif; }
.namebox .arrow { width: 16px; height: 10px; margin-left: 11px; }
.fx { display: flex; align-items: center; justify-content: space-between; width: 170px; padding: 0 12px 0 10px; border: 2px solid #6a696c; border-width: 0 2px 0 2px; border-radius: 26px 0 0 26px; background: linear-gradient(#f6f6f7, #d9d9db 60%, #c9c9cb); }
.fx i { width: 20px; height: 24px; border-radius: 50%; background: linear-gradient(90deg, #b4b8c0, #f6f6f6); }
.fx button { font: italic 34px/40px "Liberation Serif", serif; color: #4a4a4c; }
.fx sub { font-size: 24px; line-height: 20px; }
.entry { flex: 1; min-width: 0; outline: 0; }
.expand { width: 32px; border: 2px solid #5a595c; background: linear-gradient(#fafafa, #cfcfd1); }

.work { display: flex; flex: 1; min-height: 0; border-top: 8px solid #e9e9eb; background: #414043; }
.sheet { position: relative; flex: 1; min-width: 0; overflow: hidden; border-top: 2px solid #8b8b8e; background: #fff; }
table { width: 100%; table-layout: fixed; border-collapse: separate; border-spacing: 0; font: 25px/32px Lato, "Open Sans", sans-serif; color: #111; }
.rowcol { width: 52px; }
.datacol { width: 160px; }
th, td { padding: 0; height: 64px; border: 0 solid #d0d3e6; border-width: 0 2px 2px 0; white-space: nowrap; overflow: hidden; }
thead th { height: 52px; padding-top: 4px; border-width: 0 2px 3px 0; border-color: #b0b0b3; background: linear-gradient(#f8f8f9, #dedee0); }
th { font-weight: 400; color: #333; border-color: #b0b0b3; }
tbody th { background: #efeeef; }
tbody tr:first-child > * { height: 66px; }
thead .corner { background: #c6c6c8; box-shadow: inset 2px 2px 0 #eee; }
.corner svg { margin-left: 20px; }
thead th.hot { background: linear-gradient(#f8d99c, #f0bf5a); border-color: #ef9438; box-shadow: -2px 0 0 #ef9438; position: relative; }
tbody th.hot { background: #ffd58d; border-color: #ef9438; }
td { text-align: right; padding-right: 4px; }
td.word { text-align: left; padding: 0 0 0 6px; font: bold 34px/40px "Liberation Sans", Arial, sans-serif; color: #7030a0; }
td.lead { font-size: 37px; }
td.picked { position: relative; overflow: visible; }
td.picked::before { content: ""; position: absolute; inset: -3px -4px -5px -4px; border: 5px solid #14140f; }
td.picked::after { content: ""; position: absolute; right: -7px; bottom: -8px; width: 12px; height: 14px; background: #14140f; border: 2px solid #fff; border-width: 2px 0 0 2px; }
.shape { position: absolute; left: 1178px; top: 57px; width: 674px; height: 258px; display: flex; align-items: center; justify-content: center; border: 6px solid #5c4776; border-radius: 4px; background: #8064a2; font: 122px/150px Lato, "Open Sans", sans-serif; color: #9c80c0; text-shadow: 0 -2px 1px #c8a8f0, -1px 0 1px #b898e4, 0 2px 1px #b492e4, 0 12px 10px #8a68bc; }

.arrow.big-arrow { width: 18px; height: 12px; background: #b4b4b6; }
.vscroll { display: flex; flex-direction: column; align-items: center; flex: none; width: 40px; padding: 2px 6px 16px 0; border-left: 2px solid #59585b; background: #414043; }
.vscroll .split { width: 28px; height: 18px; border: 1px solid #777; background: linear-gradient(#fff 40%, #777 40% 55%, #fff 55%); }
.vscroll .big-arrow.up { margin: 18px 0; }
.vscroll .track { flex: 1; width: 26px; }
.vscroll .thumb { display: flex; flex-direction: column; align-items: center; justify-content: center; gap: 3px; height: 67%; background: linear-gradient(90deg, #fff, #ececee 50%, #cacacc); border-radius: 2px; }
.vscroll .thumb i { width: 16px; height: 2px; background: #8a8a8c; }

.sheetbar { display: flex; flex: none; height: 42px; border-top: 3px solid #5c5b5e; border-bottom: 2px solid #5c5b5e; background: linear-gradient(#5a595c, #7a797b); }
.steps { display: flex; align-items: center; justify-content: space-between; width: 126px; padding: 0 12px; border-right: 2px solid #4c4b4e; background: linear-gradient(#e4e7ea 50%, #c2c8d0 50%, #d2d5da); }
.sheets { display: flex; flex: 1; }
.sheets button { width: 128px; margin-left: -24px; background: #4d4c4f; clip-path: polygon(26px 0, 100% 0, calc(100% - 26px) 100%, 0 100%); }
.sheets button span { display: flex; align-items: center; justify-content: center; width: 126px; height: 36px; padding-right: 16px; background: linear-gradient(#dfe2e6 50%, #c4c9d0 50%, #d2d5da); clip-path: polygon(26px 0, 100% 0, calc(100% - 26px) 100%, 0 100%); }
.sheets button:first-child { position: relative; margin-left: 0; width: 124px; clip-path: polygon(0 0, 100% 0, calc(100% - 26px) 100%, 0 100%); }
.sheets button.active span { width: 124px; padding-right: 18px; background: linear-gradient(#fff 60%, #d4d6da); font-weight: 600; }
.sheets button:first-child span { clip-path: polygon(0 0, 100% 0, calc(100% - 28px) 100%, 0 100%); }
.sheets button:last-child { width: 94px; }
.sheets button:last-child span { width: 92px; }
.hscroll { display: flex; width: 41%; padding-right: 38px; background: #414043; }
.hscroll .split { flex: none; width: 14px; background: linear-gradient(90deg, #fff 45%, #777 45% 60%, #fff 60%); }
.rail { display: flex; align-items: center; flex: 1; gap: 14px; padding: 0 12px 0 8px; }
.rail .track { flex: 1; height: 100%; padding: 1px 0; }
.rail .thumb { display: flex; align-items: center; justify-content: center; gap: 2px; width: 85%; height: 100%; background: linear-gradient(#fff, #e8e8ea 50%, #c8c8ca); }
.rail .thumb i { width: 2px; height: 18px; background: #8a8a8c; }

.status { display: flex; flex: none; height: 56px; justify-content: space-between; border-bottom: 2px solid #3c4854; background: linear-gradient(#3f3e49 0, #43434f 20px, #31312f 20px, #3d3d3c); color: #fff; }
.ready { width: 132px; padding: 12px 0 0 13px; border-right: 2px solid #1c1c1c; }
.zoom { display: flex; align-items: center; width: 489px; padding: 0 10px 0 6px; border-left: 3px solid #bbb; background: linear-gradient(#c6c5c8, #a09fa3 40%, #56616c 60%, #46525c); }
.views { display: flex; width: 114px; height: 48px; border: 2px solid #666; }
.views button { flex: 1; background: linear-gradient(#d0d0d2, #a8a8ab); border-right: 1px solid #888; }
.views .on { background: linear-gradient(#f0cf9c, #eab545 50%, #fde07c); }
.zoom > span { padding: 0 17px 0 14px; }
.zoom input { appearance: none; flex: 1; min-width: 0; height: 40px; background: linear-gradient(transparent 18px, #222 18px 21px, #c0c4c8 21px 23px, transparent 23px); }
.zoom input::-webkit-slider-thumb { appearance: none; width: 18px; height: 32px; background: linear-gradient(90deg, #fff 40%, #666 40% 60%, #d8d8da 60%) 2px 2px / 14px 20px no-repeat, #444; clip-path: polygon(0 0, 100% 0, 100% 68%, 50% 100%, 0 68%); }
</style>
